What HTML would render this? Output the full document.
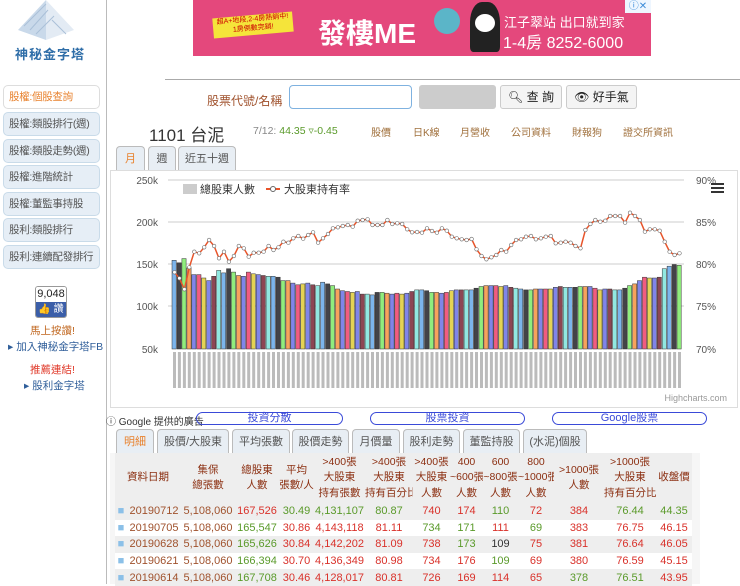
<!DOCTYPE html>
<html><head><meta charset="utf-8">
<style>
*{box-sizing:border-box;margin:0;padding:0}
body{width:740px;height:584px;overflow:hidden;background:#fff;font-family:"Liberation Sans","Noto Sans CJK TC",sans-serif;position:relative;font-size:11px;color:#333}
.a{position:absolute}
.side{left:106px;top:0;width:1px;height:584px;background:#bbb}
.mb{position:absolute;left:3px;width:97px;height:24px;border:1px solid #c9dbe9;border-radius:5px;background:#e6eef6;color:#555;font-size:10.5px;line-height:22px;padding-left:5px;white-space:nowrap;letter-spacing:-0.3px}
.tab{position:absolute;height:24px;border:1px solid #bbb;border-bottom:none;border-radius:4px 4px 0 0;background:#e8eef4;color:#555;font-size:11px;line-height:24px;text-align:center}
.lnk{position:absolute;top:124px;color:#a0703c;font-size:10px}
table{border-collapse:collapse;font-size:11px;table-layout:fixed}
td{padding:0;text-align:center;white-space:nowrap;height:16.6px;overflow:hidden}
.h td{color:#8b2e10;font-size:10.5px;line-height:15.5px;background:#eee}
.r{color:#d9312a}.g{color:#5a9a2a}.b{color:#a0522d}.d{color:#333}
</style></head><body>
<svg class="a" style="left:14px;top:0" width="64" height="42" viewBox="0 0 64 42"><polygon points="32,0 4,30 32,40" fill="#c9d9ea"/><polygon points="32,0 60,30 32,40" fill="#e3ebf4"/><path d="M10,26 L32,4 M16,30 L34,10 M22,34 L40,16 M38,20 L52,34" stroke="#aac0d8" stroke-width="1" fill="none"/></svg>
<div class="a" style="left:15px;top:44px;color:#2f6ea8;font-size:13px;font-weight:bold;letter-spacing:1px">神秘金字塔</div>
<div class="a side"></div>
<div class="mb" style="top:85px;background:#fff;border-color:#ddd;color:#e8822e">股權:個股查詢</div>
<div class="mb" style="top:112px">股權:類股排行(週)</div>
<div class="mb" style="top:139px">股權:類股走勢(週)</div>
<div class="mb" style="top:165px">股權:進階統計</div>
<div class="mb" style="top:192px">股權:董監事持股</div>
<div class="mb" style="top:218px">股利:類股排行</div>
<div class="mb" style="top:245px">股利:連續配發排行</div>
<div class="a" style="left:35px;top:286px;width:32px;height:32px;border:1px solid #999;border-radius:3px;overflow:hidden;text-align:center;font-size:11px"><div style="height:15px;line-height:15px;background:#fff;color:#222">9,048</div><div style="height:16px;background:#3b5ea8;color:#fff;line-height:16px;font-size:10px">👍 讚</div></div>
<div class="a" style="left:30px;top:323px;color:#c0661e;font-size:10.5px">馬上按讚!</div>
<div class="a" style="left:8px;top:339px;color:#2f5e9a;font-size:10.5px">▸ 加入神秘金字塔FB</div>
<div class="a" style="left:30px;top:362px;color:#e03a2a;font-size:10.5px">推薦連結!</div>
<div class="a" style="left:24px;top:378px;color:#2f5e9a;font-size:10.5px">▸ 股利金字塔</div>
<div class="a" style="left:193px;top:0;width:458px;height:56px;background:#e4487c"></div>
<div class="a" style="left:213px;top:15px;width:80px;height:20px;background:#f5e43a;transform:rotate(-5deg);font-size:7px;color:#c00;text-align:center;line-height:9px">超A+地段,2-4房熱銷中!<br>1房倒數完銷!</div>
<div class="a" style="left:318px;top:12px;color:#fff;font-size:28px;font-weight:bold">發樓ME</div>
<div class="a" style="left:434px;top:8px;width:26px;height:26px;border-radius:50%;background:#5bb5c8"></div>
<div class="a" style="left:470px;top:2px;width:30px;height:50px;border-radius:40% 40% 10% 10%;background:#222"></div>
<div class="a" style="left:475px;top:14px;width:20px;height:18px;border-radius:50%;background:#fff"></div>
<div class="a" style="left:504px;top:12px;color:#fff;font-size:13px">江子翠站 出口就到家</div>
<div class="a" style="left:503px;top:29px;color:#fff;font-size:16px">1-4房 8252-6000</div>
<div class="a" style="left:625px;top:0;width:26px;height:13px;background:#eef6ff;color:#3a8ad8;font-size:10px;line-height:13px;text-align:center">ⓘ✕</div>
<div class="a" style="left:165px;top:79px;width:575px;height:1px;background:#aaa"></div>
<div class="a" style="left:207px;top:92px;color:#a0522d;font-size:12px">股票代號/名稱</div>
<div class="a" style="left:289px;top:85px;width:123px;height:24px;border:1px solid #7fb2e0;border-radius:4px"></div>
<div class="a" style="left:419px;top:85px;width:77px;height:24px;background:#ccc;border-radius:3px"></div>
<div class="a" style="left:500px;top:85px;width:62px;height:24px;border:1px solid #ccc;border-radius:3px;background:#f4f4f4;text-align:center;line-height:22px;font-size:12px;color:#222">🔍︎ 查 詢</div>
<div class="a" style="left:566px;top:85px;width:71px;height:24px;border:1px solid #ccc;border-radius:3px;background:#f4f4f4;text-align:center;line-height:22px;font-size:12px;color:#222">👁︎ 好手氣</div>
<div class="a" style="left:149px;top:121px;font-size:17px;color:#333">1101 台泥</div>
<div class="a" style="left:253px;top:125px;font-size:10.5px;color:#888">7/12: <span style="color:#5a9a2a">44.35 ▿-0.45</span></div>
<div class="lnk" style="left:371px">股價</div><div class="lnk" style="left:413px">日K線</div><div class="lnk" style="left:460px">月營收</div><div class="lnk" style="left:511px">公司資料</div><div class="lnk" style="left:572px">財報狗</div><div class="lnk" style="left:623px">證交所資訊</div>
<div class="tab" style="left:116px;top:146px;width:29px;color:#e8822e">月</div>
<div class="tab" style="left:148px;top:146px;width:28px">週</div>
<div class="tab" style="left:178px;top:146px;width:58px">近五十週</div>
<div class="a" style="left:110px;top:170px;width:628px;height:238px;border:1px solid #ddd"></div>
<svg class="a" style="left:0;top:0" width="740" height="410" font-family="Liberation Sans" font-size="10" fill="#555">
<g stroke="#ccc"><line x1="168" x2="684" y1="180" y2="180"/><line x1="168" x2="684" y1="222" y2="222"/><line x1="168" x2="684" y1="264" y2="264"/><line x1="168" x2="684" y1="306" y2="306"/></g>
<text x="158" y="184" text-anchor="end">250k</text><text x="158" y="226" text-anchor="end">200k</text><text x="158" y="268" text-anchor="end">150k</text><text x="158" y="310" text-anchor="end">100k</text><text x="158" y="353" text-anchor="end">50k</text>
<text x="696" y="184">90%</text><text x="696" y="226">85%</text><text x="696" y="268">80%</text><text x="696" y="310">75%</text><text x="696" y="353">70%</text>
<rect x="183" y="184" width="14" height="10" fill="#ccc"/><text x="200" y="193" fill="#333" font-size="11">總股東人數</text>
<line x1="266" x2="280" y1="189" y2="189" stroke="#e8542a" stroke-width="2"/><circle cx="273" cy="189" r="2.5" fill="#fff" stroke="#666"/><text x="284" y="193" fill="#333" font-size="11">大股東持有率</text>
<g fill="#333"><rect x="711" y="183" width="13" height="2"/><rect x="711" y="187" width="13" height="2"/><rect x="711" y="191" width="13" height="2"/></g>
<text x="727" y="401" text-anchor="end" fill="#999" font-size="9">Highcharts.com</text>
<g id="bars"></g><g id="xl"></g>
</svg>
<div class="a" style="left:106px;top:413px;font-size:10px;color:#333">ⓘ Google 提供的廣告</div>
<div class="a" style="left:196px;top:412px;width:147px;height:13px;border:1px solid #3a4ad8;border-radius:7px;color:#3a4ad8;font-size:11px;line-height:11px;text-align:center">投資分散</div>
<div class="a" style="left:370px;top:412px;width:155px;height:13px;border:1px solid #3a4ad8;border-radius:7px;color:#3a4ad8;font-size:11px;line-height:11px;text-align:center">股票投資</div>
<div class="a" style="left:552px;top:412px;width:155px;height:13px;border:1px solid #3a4ad8;border-radius:7px;color:#3a4ad8;font-size:11px;line-height:11px;text-align:center">Google股票</div>
<div class="tab" style="left:116px;top:429px;width:38px;color:#e8822e">明細</div>
<div class="tab" style="left:157px;top:429px;width:72px">股價/大股東</div>
<div class="tab" style="left:232px;top:429px;width:58px">平均張數</div>
<div class="tab" style="left:292px;top:429px;width:57px">股價走勢</div>
<div class="tab" style="left:352px;top:429px;width:48px">月價量</div>
<div class="tab" style="left:403px;top:429px;width:57px">股利走勢</div>
<div class="tab" style="left:463px;top:429px;width:57px">董監持股</div>
<div class="tab" style="left:523px;top:429px;width:64px">(水泥)個股</div>
<div class="a" style="left:110px;top:453px;width:590px;height:131px;background:#f6f6f6"></div>
<table class="a" style="left:115px;top:453px;width:577px">
<colgroup><col style="width:12px"><col style="width:54px"><col style="width:54px"><col style="width:44px"><col style="width:35px"><col style="width:51px"><col style="width:48px"><col style="width:37px"><col style="width:33px"><col style="width:35px"><col style="width:36px"><col style="width:50px"><col style="width:52px"><col style="width:36px"></colgroup>
<tr class="h"><td colspan="2" style="height:50px">資料日期</td><td>集保<br>總張數</td><td>總股東<br>人數</td><td>平均<br>張數/人</td><td>&gt;400張<br>大股東<br>持有張數</td><td>&gt;400張<br>大股東<br>持有百分比</td><td>&gt;400張<br>大股東<br>人數</td><td>400<br>~600張<br>人數</td><td>600<br>~800張<br>人數</td><td>800<br>~1000張<br>人數</td><td>&gt;1000張<br>人數</td><td>&gt;1000張<br>大股東<br>持有百分比</td><td>收盤價</td></tr>
<tr style="background:#eee"><td style="color:#8bc0e8">■</td><td class="b">20190712</td><td class="b">5,108,060</td><td class="r">167,526</td><td class="g">30.49</td><td class="g">4,131,107</td><td class="g">80.87</td><td class="r">740</td><td class="r">174</td><td class="g">110</td><td class="r">72</td><td class="r">384</td><td class="g">76.44</td><td class="g">44.35</td></tr>
<tr style="background:#fff"><td style="color:#8bc0e8">■</td><td class="b">20190705</td><td class="b">5,108,060</td><td class="g">165,547</td><td class="r">30.86</td><td class="r">4,143,118</td><td class="r">81.11</td><td class="g">734</td><td class="g">171</td><td class="r">111</td><td class="g">69</td><td class="r">383</td><td class="r">76.75</td><td class="r">46.15</td></tr>
<tr style="background:#eee"><td style="color:#8bc0e8">■</td><td class="b">20190628</td><td class="b">5,108,060</td><td class="g">165,626</td><td class="r">30.84</td><td class="r">4,142,202</td><td class="r">81.09</td><td class="r">738</td><td class="g">173</td><td class="d">109</td><td class="r">75</td><td class="r">381</td><td class="r">76.64</td><td class="r">46.05</td></tr>
<tr style="background:#fff"><td style="color:#8bc0e8">■</td><td class="b">20190621</td><td class="b">5,108,060</td><td class="g">166,394</td><td class="r">30.70</td><td class="r">4,136,349</td><td class="r">80.98</td><td class="r">734</td><td class="r">176</td><td class="g">109</td><td class="r">69</td><td class="r">380</td><td class="r">76.59</td><td class="r">45.15</td></tr>
<tr style="background:#eee"><td style="color:#8bc0e8">■</td><td class="b">20190614</td><td class="b">5,108,060</td><td class="g">167,708</td><td class="r">30.46</td><td class="r">4,128,017</td><td class="r">80.81</td><td class="r">726</td><td class="r">169</td><td class="r">114</td><td class="r">65</td><td class="g">378</td><td class="g">76.51</td><td class="r">43.95</td></tr>
</table>
<script>
var v=[155,152,157,146,138,138,134,131,136,143,140,145,141,137,136,141,139,138,137,136,136,135,131,131,128,126,127,128,126,125,129,127,125,121,119,118,117,118,115,115,114,117,117,116,115,116,115,116,118,120,120,119,117,117,116,117,119,120,120,120,120,122,124,125,125,125,124,125,123,122,121,120,120,121,121,121,121,123,124,123,123,123,124,124,124,122,120,121,121,120,120,122,125,127,131,135,134,134,135,145,148,150,149];
var lz=[307,325,358,292,245,250,232,210,228,265,245,275,258,228,235,260,248,248,245,228,240,232,215,218,205,198,203,206,195,187,218,205,192,175,172,168,165,170,152,150,148,165,165,165,150,162,160,162,178,187,186,188,175,183,188,175,182,200,205,208,210,207,238,258,268,262,255,240,245,225,210,208,200,198,208,205,200,198,210,220,218,215,218,228,235,180,162,150,155,152,138,138,138,158,128,138,150,185,178,178,182,215,245,255,250];
var c=['#7cb5ec','#434348','#90ed7d','#f7a35c','#8085e9','#f15c80','#e4d354','#8085e9','#8d4653','#91e8e1'];
var n=v.length,x0=172,w=(682-x0)/n,s='',l='',p='',xl='';
for(var i=0;i<n;i++){var y=349-(v[i]-50)*169/200;s+='<rect x="'+(x0+i*w).toFixed(1)+'" y="'+y.toFixed(1)+'" width="'+(w-0.8).toFixed(1)+'" height="'+(349-y).toFixed(1)+'" fill="'+c[i%10]+'" stroke="#333" stroke-width="0.5"/>';
var j=Math.round(i*(lz.length-1)/(n-1)),ly=170+lz[j]/3,cx=(x0+i*w+w/2).toFixed(1);p+=(i?'L':'M')+cx+','+ly.toFixed(1);l+='<circle cx="'+cx+'" cy="'+ly.toFixed(1)+'" r="1.8" fill="#fff" stroke="#666" stroke-width="0.6"/>';
xl+='<rect x="'+(+cx-1.5)+'" y="352" width="3" height="36" fill="#bbb"/>';}
document.getElementById('bars').innerHTML=s+'<path d="'+p+'" fill="none" stroke="#e8542a" stroke-width="1.5"/>'+l;
document.getElementById('xl').innerHTML=xl;
</script>
</body></html>
